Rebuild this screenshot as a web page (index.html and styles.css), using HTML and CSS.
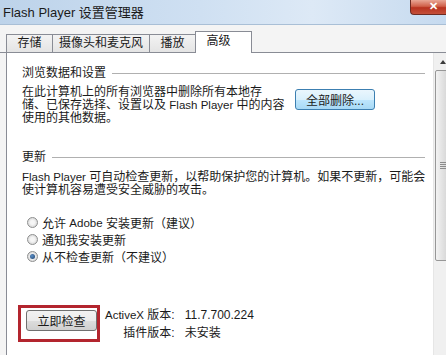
FILE: index.html
```html
<!DOCTYPE html>
<html lang="zh-CN">
<head>
    <meta charset="UTF-8">
    <title>Flash Player 设置管理器</title>
    <link rel="stylesheet" href="styles.css">
</head>
<body>
    <div class="window">
        <div class="titlebar">
            <span class="title">Flash Player 设置管理器</span>
            <span class="close">✕</span>
        </div>
        <div class="tabs">
            <div class="tab">存储</div>
            <div class="tab">摄像头和麦克风</div>
            <div class="tab">播放</div>
            <div class="tab active">高级</div>
        </div>
        <div class="panel">
            <div class="content">
                <div class="group-title">浏览数据和设置</div>
                <div class="data-row">
                    <p class="text narrow">在此计算机上的所有浏览器中删除所有本地存<br>储、已保存选择、设置以及 <span class="latin">Flash Player</span> 中的内容<br>使用的其他数据。</p>
                    <button class="button blue">全部删除...</button>
                </div>

                <div class="group-title second">更新</div>
                <p class="text wide"><span class="latin">Flash Player</span> 可自动检查更新，以帮助保护您的计算机。如果不更新，可能会<br>使计算机容易遭受安全威胁的攻击。</p>
                <ul class="radios">
                    <li><span class="radio"></span>允许 <span class="latin">Adobe</span> 安装更新（建议）</li>
                    <li><span class="radio"></span>通知我安装更新</li>
                    <li><span class="radio checked"></span>从不检查更新（不建议）</li>
                </ul>

                <div class="check-row">
                    <div class="highlight">
                        <button class="button gray">立即检查</button>
                    </div>
                    <div class="versions">
                        <span class="label"><span class="latin">ActiveX</span> 版本:</span><span>11.7.700.224</span>
                        <span class="label">插件版本:</span><span>未安装</span>
                    </div>
                </div>

                <div class="group-title cut">开发人员工具</div>
            </div>
            <div class="scrollbar">
                <div class="arrow"></div>
                <div class="thumb"><span class="grip"></span></div>
            </div>
        </div>
    </div>
</body>
</html>
```

FILE: styles.css
```css
body {
    margin: 0;
    font-family: "Liberation Sans", "Noto Sans CJK SC", sans-serif;
    font-size: 12px;
    color: #1a1a1a;
}

.window {
    width: 446px;
    height: 355px;
    overflow: hidden;
    background-color: #f4f4f4;
    display: flex;
    flex-direction: column;
}

.titlebar {
    height: 25px;
    flex-shrink: 0;
    display: flex;
    align-items: flex-start;
    background: linear-gradient(to right, #bdd3ea, #cfe0f2 45%, #dde9f6 70%, #c6daef);
    border-bottom: 1px solid #a9bfd6;
    box-sizing: border-box;
}

.title {
    padding: 5px 0 0 3px;
    font-size: 13px;
    line-height: 15px;
    color: #1b1b1b;
}

.close {
    margin-left: auto;
    width: 36px;
    height: 15px;
    padding-left: 18px;
    box-sizing: border-box;
    background: linear-gradient(#e9a796, #d0604a 45%, #b8321f 55%, #c4503a);
    border: 1px solid #6e2b22;
    border-top: none;
    border-right: none;
    border-radius: 0 0 0 4px;
    color: #fff;
    font-size: 11px;
    line-height: 13px;
    font-weight: bold;
}

.tabs {
    display: flex;
    align-items: flex-end;
    height: 28px;
    flex-shrink: 0;
    padding-left: 6px;
    box-sizing: border-box;
    border-bottom: 1px solid #898c95;
}

.tab {
    height: 17px;
    min-width: 33px;
    line-height: 17px;
    padding: 0 6px;
    margin-right: -1px;
    text-align: center;
    border: 1px solid #898c95;
    border-bottom: none;
    background: linear-gradient(#f3f3f3, #e4e4e4);
}

.tab.active {
    height: 21px;
    line-height: 19px;
    padding: 0 16px 0 6px;
    margin-bottom: -1px;
    background: #fff;
}

.panel {
    flex: 1;
    display: flex;
    margin-left: 6px;
    background: #fff;
    border-left: 1px solid #898c95;
}

.content {
    flex: 1;
    padding: 0 8px 0 15px;
}

.latin {
    font-size: 11.5px;
}

.group-title {
    display: flex;
    align-items: center;
    gap: 6px;
    margin-top: 13px;
    line-height: 14px;
}

.group-title::after {
    content: "";
    flex: 1;
    border-top: 1px solid #b0b0b0;
}

.group-title.second {
    margin-top: 25px;
}

.group-title.cut {
    margin-top: 13px;
}

.data-row {
    display: flex;
    align-items: flex-start;
    margin-top: 6px;
}

.text {
    margin: 0;
    line-height: 13px;
    white-space: nowrap;
}

.narrow {
    width: 244px;
}

.wide {
    margin-top: 7px;
}

.button {
    font-family: inherit;
    font-size: 12px;
    color: #1a1a1a;
    border-radius: 3px;
    padding: 0;
}

.button.blue {
    width: 80px;
    height: 21px;
    margin: 3px 0 0 29px;
    border: 1px solid #3c7fb1;
    background: linear-gradient(#eaf6fd, #d9f0fc 50%, #bee6fd 51%, #a7d9f5);
}

.button.gray {
    width: 71px;
    height: 21px;
    border: 1px solid #707070;
    background: linear-gradient(#f2f2f2, #ebebeb 50%, #dddddd 51%, #cfcfcf);
}

.radios {
    list-style: none;
    margin: 17px 0 0 0;
    padding: 0 0 0 5px;
}

.radios li {
    display: flex;
    align-items: center;
    height: 17px;
    white-space: pre;
}

.radio {
    width: 11px;
    height: 11px;
    margin-right: 4px;
    border: 1px solid #8e8f8f;
    border-radius: 50%;
    box-sizing: border-box;
    background: radial-gradient(circle, #f6f6f6 30%, #d6d6d6 80%);
    display: flex;
    align-items: center;
    justify-content: center;
}

.radio.checked::after {
    content: "";
    width: 5px;
    height: 5px;
    border-radius: 50%;
    background: radial-gradient(circle at 40% 40%, #5b8fc6, #1d3f6b);
}

.check-row {
    display: flex;
    align-items: flex-start;
    margin-top: 40px;
    margin-left: -4px;
}

.highlight {
    border: 3px solid #b3252e;
    padding: 2px 0 8px 5px;
}

.versions {
    display: grid;
    grid-template-columns: auto auto;
    column-gap: 10px;
    margin: 1px 0 0 5px;
    line-height: 18px;
}

.versions .label {
    text-align: right;
}

.scrollbar {
    width: 17px;
    flex-shrink: 0;
    background: #f0f0f0;
    border-left: 1px solid #e6e6e6;
    display: flex;
    flex-direction: column;
    align-items: center;
}

.arrow {
    height: 17px;
    width: 100%;
    display: flex;
    align-items: center;
    justify-content: center;
}

.arrow::after {
    content: "";
    border-left: 3px solid transparent;
    border-right: 3px solid transparent;
    border-bottom: 4px solid #3b3b3b;
}

.thumb {
    width: 15px;
    height: 191px;
    box-sizing: border-box;
    border: 1px solid #979797;
    border-radius: 2px;
    background: linear-gradient(to right, #f3f3f3, #e2e2e2 50%, #d2d2d2);
    display: flex;
    align-items: center;
    justify-content: center;
}

.grip {
    width: 6px;
    height: 7px;
    background: repeating-linear-gradient(#8c8c8c 0 1px, transparent 1px 2px);
}
```
